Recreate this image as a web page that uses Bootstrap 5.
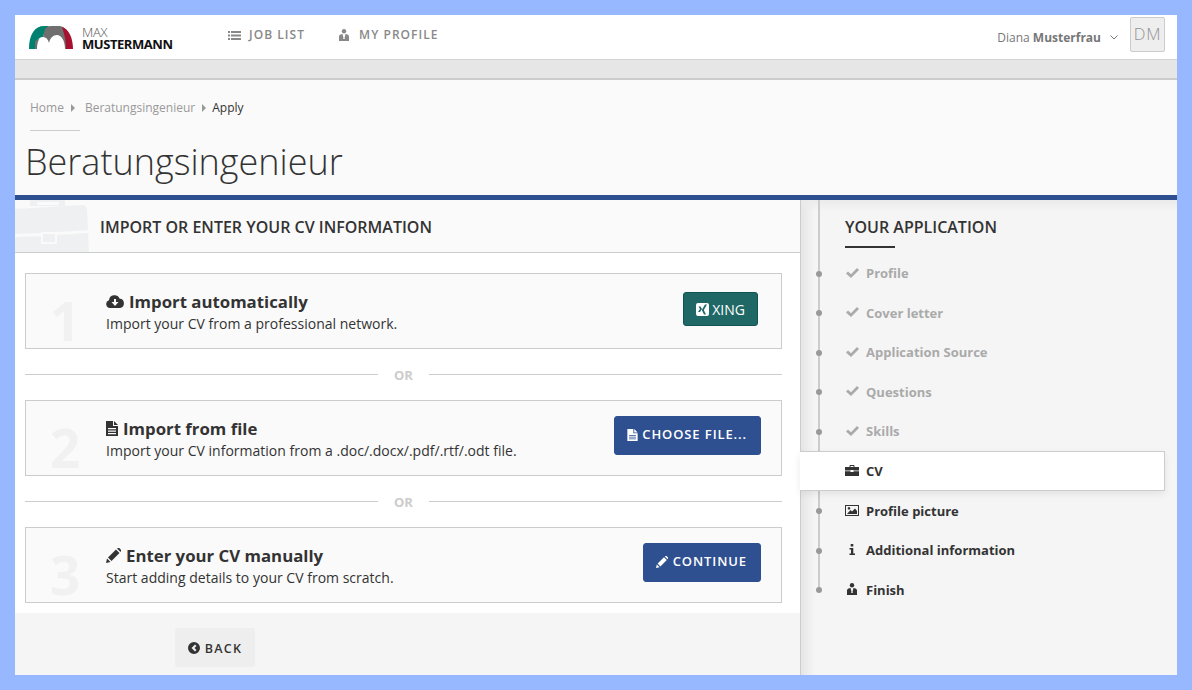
<!DOCTYPE html>
<html lang="en">
<head>
<meta charset="utf-8">
<title>Beratungsingenieur - Apply</title>
<link href="https://cdn.jsdelivr.net/npm/bootstrap@5.3.0/dist/css/bootstrap.min.css" rel="stylesheet">
<style>
html,body{height:100%}
body{background:#97b8ff;font-family:"Open Sans",sans-serif;color:#333;padding:15px;overflow:hidden}
svg{fill:currentColor;flex:none}
.app-frame{height:660px;background:#fff}
.top-bar{height:45px;background:#fff;border-bottom:1px solid #d4d4d4;padding:0 12px 0 14px}
.brand-box{width:143px;height:44px;gap:9px;text-decoration:none;color:#222;margin-right:56px}
.brand-max{display:block;font-size:13px;font-weight:300;line-height:12px;color:#555;padding-top:2px;letter-spacing:-.3px}
.brand-name{display:block;font-size:13px;font-weight:700;line-height:12px;color:#111;letter-spacing:-.45px}
.top-link{font-size:12px;font-weight:600;letter-spacing:1.05px;color:#888;text-decoration:none;gap:8px;margin-right:34px;padding-bottom:4px}
.user-name{font-size:12px;color:#777;margin-right:9px;padding-top:2px}
.user-name b{font-weight:700}
.user-chev{color:#777;margin-right:12px}
.user-pic{width:35px;height:35px;background:#eee;border:1px solid #ccc;border-radius:2px;font-size:16.5px;font-weight:300;color:#929292;margin-top:-5px;letter-spacing:.8px}
.grey-band{height:20px;background:#e6e6e6;border-bottom:2px solid #ccc}
.page-head{height:115px;background:#fafafa;border-bottom:0;padding:20px 15px 0}
.crumb-list{font-size:12px;margin:0;height:16px;align-items:center;line-height:16px}
.crumb-list a{color:#999;text-decoration:none}
.crumb-list .breadcrumb-item{padding:0;color:#333}
.crumb-list .breadcrumb-item::before{display:none}
.crumb-tri{width:0;height:0;border-left:4px solid #999;border-top:4px solid transparent;border-bottom:4px solid transparent;margin:0 10px 0 7px}
.crumb-list .crumb-now{margin-left:-4px}
.crumb-line{width:50px;height:1px;background:#ccc;margin:14px 0 0}
.page-title{font-size:36px;font-weight:300;color:#333;margin:9px 0 0 -5px;line-height:44px}
.blue-bar{height:5px;background:#2f5090}
.main-row{height:475px}
.left-col{width:785px;background:#f5f5f5}
.left-head{height:53px;background:#fafafa;border-bottom:1px solid #ccc;padding:3px 0 0 85px;overflow:hidden}
.left-head h2,.side-head{font-size:16px;font-weight:600;color:#333;margin:0}
.case-mark{left:0;top:0;color:#eff0f2}
.left-body{background:#fff;padding:20px 18px 10px 10px}
.step-box{height:76px;background:#fafafa;border:1px solid #ccc;border-radius:0;padding:0 20px 0 80px}
.step-num{left:24px;top:13px;font-size:53px;font-weight:700;color:#f1f1f1;line-height:68px}
.step-copy{position:relative;margin-top:2px}
.step-title{font-size:16.8px;font-weight:700;color:#333;line-height:23px;gap:5px;margin:-1px 0 1px}
.step-sub{font-size:14px;line-height:20px;color:#333;margin:0;letter-spacing:.01px}
.step-btn{height:39px;background:#2f5090;border-color:#2f5090;color:#fff;font-size:13px;font-weight:600;letter-spacing:.9px;border-radius:3px;gap:5px;padding:0 13px 0 12px;margin-bottom:6px}
.step-btn.file-btn{gap:4px}
.step-btn:hover{background:#2f5090;border-color:#2f5090;color:#fff}
.xing-btn{height:34px;background:#1f6866;border-color:#0f5553;color:#fff;font-size:14px;font-weight:400;letter-spacing:0;border-radius:3px;gap:3px;padding:0 12px;margin:0 3px 4px 0}
.xing-btn:hover{background:#1f6866;border-color:#0f5553;color:#fff}
.or-row{height:51px;gap:16px;padding-bottom:1px}
.or-line{flex:1;height:1px;background:#ccc}
.or-text{font-size:13px;font-weight:700;color:#ccc;width:19px;padding-top:2px;line-height:16px}
.left-foot{height:62px;padding:15px 0 0 160px}
.back-btn{height:39px;width:80px;background:#eee;border:0;color:#333;font-size:12.5px;font-weight:600;letter-spacing:1.3px;border-radius:3px;gap:5px;padding:3px 0 0}
.back-btn svg{margin-top:-3px}
.back-btn:hover{background:#eee;color:#333}
.side-col{width:377px;border-left:1px solid #ccc;background:linear-gradient(90deg,#e6e6e6,#f5f5f5 14px);}
.side-shade{left:0;right:0;top:0;height:12px;background:linear-gradient(#ebebeb,rgba(245,245,245,0))}
.side-top{padding:17px 0 0 44px;height:53.9px}
.side-head{line-height:20px}
.side-rule{width:50px;height:2px;background:#333;margin-top:9px}
.step-line{left:17px;top:0;height:390px;width:2px;background:#ccc}
.side-list{list-style:none;margin:0;padding:0 12px 0 0;position:relative}
.side-item{height:39.6px;padding-left:44px;font-size:13px;font-weight:700;color:#333;gap:7px;position:relative}
.side-item.is-done{color:#aaa}
.side-item.is-now{background:#fff;border:1px solid #ccc;border-left:0;margin:-.6px 0 .6px -1px;padding:1px 0 0 45px;box-shadow:0 3px 8px rgba(0,0,0,.08);z-index:2}
.side-ico{width:14px;display:flex;justify-content:center;margin-top:-2px}
.side-dot{position:absolute;left:15px;top:50%;width:6px;height:6px;margin-top:-3px;border-radius:50%;background:#999}
</style>
</head>
<body>
<div class="app-frame d-flex flex-column">
  <nav class="top-bar d-flex align-items-center">
    <a class="brand-box d-flex align-items-center" href="#">
      <svg width="44" height="24" viewBox="0 0 44 24"><path fill="#00806f" d="M0 24C0 9 6 1 15 1h5c-3 3-5 7-6 11-4 0-8 4-8 12z"/><path fill="#6f6f6f" d="M16 4Q18 1 22 1h9c5 1 7 5 7 13v10H6v-8l8-4z"/><path fill="#a7102f" d="M33 2c7 2 11 11 11 22h-7c0-7-1-13-4-22z"/><path fill="#fff" d="M8 24c0-7 2-12 6-12 3 0 5 2 6 6 1-5 4-8 8-8 4 0 8 5 8 14z"/></svg>
      <span><span class="brand-max">MAX</span><span class="brand-name">MUSTERMANN</span></span>
    </a>
    <a class="top-link d-flex align-items-center" href="#">
      <svg width="13" height="9" viewBox="0 0 13 9"><path d="M0 0h2v2H0zM3 0h10v2H3zM0 3.500h2v2H0zM3 3.500h10v2H3zM0 7h2v2H0zM3 7h10v2H3z"/></svg>JOB LIST</a>
    <a class="top-link d-flex align-items-center" href="#" style="gap:10px">
      <svg width="10" height="12" viewBox="0 0 10 12"><circle cx="5" cy="2.200" r="2.200"/><path d="M0 12V7.500C0 6 1.500 5 3.500 5L4.400 8.500 4.200 10h1.600l-.2-1.500L6.500 5C8.500 5 10 6 10 7.500V12z"/></svg>MY PROFILE</a>
    <div class="ms-auto d-flex align-items-center">
      <span class="user-name">Diana <b>Musterfrau</b></span>
      <svg class="user-chev" width="8" height="5" viewBox="0 0 8 5"><path fill="none" stroke="currentColor" stroke-width="1" d="M.5.500 4 4 7.500.500"/></svg>
      <span class="user-pic d-flex align-items-center justify-content-center">DM</span>
    </div>
  </nav>
  <div class="grey-band"></div>
  <header class="page-head">
    <ol class="breadcrumb crumb-list">
      <li class="breadcrumb-item"><a href="#">Home</a></li><li class="crumb-tri"></li>
      <li class="breadcrumb-item"><a href="#">Beratungsingenieur</a></li><li class="crumb-tri"></li>
      <li class="breadcrumb-item active text-reset crumb-now">Apply</li>
    </ol>
    <div class="crumb-line"></div>
    <h1 class="page-title">Beratungsingenieur</h1>
  </header>
  <div class="blue-bar"></div>
  <div class="main-row d-flex">
    <section class="left-col d-flex flex-column">
      <div class="left-head position-relative d-flex align-items-center">
        <svg class="case-mark position-absolute" width="74" height="52" viewBox="0 0 74 52"><path fill-rule="evenodd" d="M15 0h35v6H15zM22 2v3h22V2z"/><path fill-rule="evenodd" d="M0 9 68 5c2 0 3 2 4 4l2 43H0zM26 32v12h16V32zM28 34h12v8H28z"/><path fill="#fafafa" d="M0 34 26 33v3L0 37zM42 32l31-2v3L42 35zM26 32h16v2H26zM26 42h16v2H26zM26 32h2v12h-2zM40 32h2v12h-2z"/></svg>
        <h2>IMPORT OR ENTER YOUR CV INFORMATION</h2>
      </div>
      <div class="left-body">
        <div class="card step-box position-relative d-flex flex-row align-items-center justify-content-between">
          <span class="step-num position-absolute">1</span>
          <div class="step-copy">
            <h3 class="step-title d-flex align-items-center">
              <svg width="18" height="15" viewBox="0 0 18 15"><path fill-rule="evenodd" d="M4 14a4 4 0 0 1-1-7.800A5.500 5.500 0 0 1 13.500 4.500 4.800 4.800 0 0 1 14 14zM8 5v3H5.500L9 12l3.500-4H10V5z"/></svg>Import automatically</h3>
            <p class="step-sub">Import your CV from a professional network.</p>
          </div>
          <a class="btn xing-btn d-flex align-items-center" href="#">
            <svg width="13" height="13" viewBox="0 0 13 13"><path fill-rule="evenodd" d="M2 0h9a2 2 0 0 1 2 2v9a2 2 0 0 1-2 2H2a2 2 0 0 1-2-2V2a2 2 0 0 1 2-2zM2.500 3.500l1.500 2.500-2 3h2l2-3L4.500 3.500zM9 1.500 5.800 7 8 11.500h2L7.800 7 11 1.500z"/></svg>XING</a>
        </div>
        <div class="or-row d-flex align-items-center"><span class="or-line"></span><span class="or-text">OR</span><span class="or-line"></span></div>
        <div class="card step-box position-relative d-flex flex-row align-items-center justify-content-between">
          <span class="step-num position-absolute">2</span>
          <div class="step-copy">
            <h3 class="step-title d-flex align-items-center">
              <svg width="12" height="15" viewBox="0 0 12 15"><path fill-rule="evenodd" d="M0 0h7v5h5v10H0zM8 0l4 4H8zM2 7v1.200h8V7zM2 9.500v1.200h8V9.500zM2 12v1.200h8V12z"/></svg>Import from file</h3>
            <p class="step-sub">Import your CV information from a .doc/.docx/.pdf/.rtf/.odt file.</p>
          </div>
          <a class="btn step-btn file-btn d-flex align-items-center" href="#">
            <svg width="11" height="12" viewBox="0 0 12 14"><path fill-rule="evenodd" d="M0 0h7v5h5v9H0zM8 0l4 4H8zM2 7v1h8V7zM2 9v1h8V9zM2 11v1h8v-1z"/></svg>CHOOSE FILE...</a>
        </div>
        <div class="or-row d-flex align-items-center"><span class="or-line"></span><span class="or-text">OR</span><span class="or-line"></span></div>
        <div class="card step-box position-relative d-flex flex-row align-items-center justify-content-between">
          <span class="step-num position-absolute">3</span>
          <div class="step-copy">
            <h3 class="step-title d-flex align-items-center">
              <svg width="15" height="15" viewBox="0 0 15 15"><path d="M0 15l1-4.500 3.500 3.500zM2 9.500 10 1.500l3.500 3.500-8 8zM11 .500 12 0c.5-.2 1-.1 1.500.3l1.200 1.200c.4.5.5 1 .3 1.500L14.500 4z"/></svg>Enter your CV manually</h3>
            <p class="step-sub">Start adding details to your CV from scratch.</p>
          </div>
          <a class="btn step-btn d-flex align-items-center" href="#">
            <svg width="12" height="12" viewBox="0 0 15 15"><path d="M0 15l1-4.500 3.500 3.500zM2 9.500 10 1.500l3.500 3.500-8 8zM11 .500 12 0c.5-.2 1-.1 1.500.3l1.200 1.200c.4.5.5 1 .3 1.500L14.500 4z"/></svg>CONTINUE</a>
        </div>
      </div>
      <div class="left-foot">
        <a class="btn back-btn d-flex align-items-center justify-content-center" href="#">
          <svg width="12" height="12" viewBox="0 0 12 12"><path fill-rule="evenodd" d="M6 0a6 6 0 1 1 0 12A6 6 0 0 1 6 0zM7 2.500 3.500 6 7 9.500 8.500 8 6.500 6l2-2z"/></svg>BACK</a>
      </div>
    </section>
    <aside class="side-col position-relative">
      <div class="side-shade position-absolute"></div>
      <div class="step-line position-absolute"></div>
      <div class="side-top position-relative">
        <h2 class="side-head">YOUR APPLICATION</h2>
        <div class="side-rule"></div>
      </div>
      <ul class="side-list">
        <li class="side-item is-done d-flex align-items-center"><span class="side-dot"></span><span class="side-ico"><svg width="13" height="10" viewBox="0 0 13 10"><path d="M0 5.500 2 3.500 5 6.300 11 0l2 2-8 8z"/></svg></span>Profile</li>
        <li class="side-item is-done d-flex align-items-center"><span class="side-dot"></span><span class="side-ico"><svg width="13" height="10" viewBox="0 0 13 10"><path d="M0 5.500 2 3.500 5 6.300 11 0l2 2-8 8z"/></svg></span>Cover letter</li>
        <li class="side-item is-done d-flex align-items-center"><span class="side-dot"></span><span class="side-ico"><svg width="13" height="10" viewBox="0 0 13 10"><path d="M0 5.500 2 3.500 5 6.300 11 0l2 2-8 8z"/></svg></span>Application Source</li>
        <li class="side-item is-done d-flex align-items-center"><span class="side-dot"></span><span class="side-ico"><svg width="13" height="10" viewBox="0 0 13 10"><path d="M0 5.500 2 3.500 5 6.300 11 0l2 2-8 8z"/></svg></span>Questions</li>
        <li class="side-item is-done d-flex align-items-center"><span class="side-dot"></span><span class="side-ico"><svg width="13" height="10" viewBox="0 0 13 10"><path d="M0 5.500 2 3.500 5 6.300 11 0l2 2-8 8z"/></svg></span>Skills</li>
        <li class="side-item is-now d-flex align-items-center"><span class="side-ico"><svg width="14" height="11" viewBox="0 0 14 11"><path d="M4.500 2V.800C4.500.3 4.800 0 5.300 0h3.400c.5 0 .8.300.8.800V2H8.500V1h-3v1zM0 2h14v3.500H8.500V5h-3v.500H0zM0 6.300h5.500V7h3v-.700H14V11H0z"/></svg></span>CV</li>
        <li class="side-item d-flex align-items-center"><span class="side-dot"></span><span class="side-ico"><svg width="14" height="11" viewBox="0 0 14 11"><path fill-rule="evenodd" d="M0 0h14v11H0zM1 1v9h12V1zM2 9 5.500 5 7 6.500 10 3.500 12 6v3zM4 2a1.300 1.300 0 1 1-.01 0z"/></svg></span>Profile picture</li>
        <li class="side-item d-flex align-items-center"><span class="side-dot"></span><span class="side-ico"><svg width="6" height="11" viewBox="0 0 6 11"><path d="M1.700 0h2.600v2.400H1.700zM.5 4h3.800v5.500H6V11H.500V9.500h1.500V5.500H.5z"/></svg></span>Additional information</li>
        <li class="side-item d-flex align-items-center"><span class="side-dot"></span><span class="side-ico"><svg width="10" height="12" viewBox="0 0 10 12"><circle cx="5" cy="2.200" r="2.200"/><path d="M0 12V7.500C0 6 1.500 5 3.500 5L4.400 8.500 4.200 10h1.600l-.2-1.500L6.500 5C8.500 5 10 6 10 7.500V12z"/></svg></span>Finish</li>
      </ul>
    </aside>
  </div>
</div>
<script src="https://cdn.jsdelivr.net/npm/bootstrap@5.3.0/dist/js/bootstrap.bundle.min.js"></script>
</body>
</html>
